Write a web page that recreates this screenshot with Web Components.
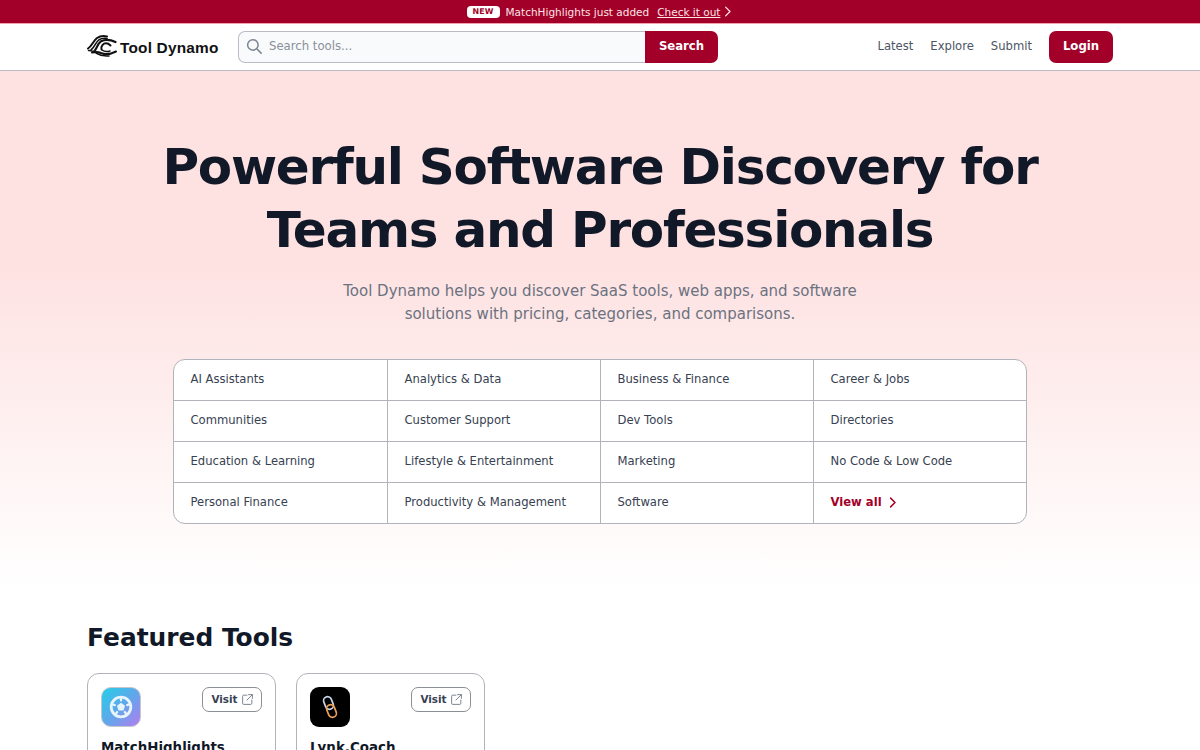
<!DOCTYPE html>
<html lang="en"><head><meta charset="utf-8"><title>Tool Dynamo</title>
<style>
html,body{margin:0;padding:0;height:750px;overflow:hidden;background:#fff;font-family:"DejaVu Sans",sans-serif;color:#111827}
</style></head><body>
<td-banner></td-banner>
<td-header></td-header>
<td-hero></td-hero>
<td-featured></td-featured>
<script>
const def=(name,html)=>{customElements.define(name,class extends HTMLElement{constructor(){super();this.attachShadow({mode:'open'}).innerHTML=html;}})};
const chev=(s,c,w)=>`<svg width="${s}" height="${s}" viewBox="0 0 24 24" fill="none" stroke="${c}" stroke-width="${w}" stroke-linecap="round" stroke-linejoin="round" style="flex:none"><path d="M9 5l7 7-7 7"/></svg>`;
def('td-banner',`<style>:host{display:flex;align-items:center;justify-content:center;height:24px;box-sizing:border-box;padding-left:2px;background:#a20028;color:#fde3e6;font-size:10.5px;border-bottom:1px solid #f0a0ac}
.n{background:#fff;color:#a20028;font-size:7.9px;font-weight:700;letter-spacing:.2px;border-radius:4px;width:33px;text-align:center;height:12px;line-height:12px;margin-right:6px}
a{color:inherit;text-decoration:underline;margin:0 0 0 8px}</style><span class="n">NEW</span><span>MatchHighlights just added</span><a>Check it out</a>${chev(15,'#fde3e6',2)}`);
def('td-header',`<style>:host{display:flex;align-items:center;box-sizing:border-box;height:47px;padding:0 87px 1px;background:#fff;border-bottom:1px solid #b9bcc2}
.logo{display:flex;align-items:center;width:151px;flex:none;gap:3px}
.logo b{font:700 15.4px "Liberation Sans",Arial,sans-serif;color:#111;margin-top:2px;letter-spacing:.2px}
.s{display:flex;width:480px;height:32px;box-sizing:border-box;flex:none}
.i{flex:1;display:flex;align-items:center;gap:5.600px;padding:0 0 1px 6.400px;background:#f8fafc;border:1px solid #b9bcc2;border-right:0;border-radius:7px 0 0 7px;color:#8a9099;font-size:11.7px}
.b{width:73px;padding-bottom:1px;box-sizing:border-box;background:#a20028;color:#fff;font-weight:700;font-size:11.7px;display:flex;align-items:center;justify-content:center;border-radius:0 7px 7px 0}
nav{margin-left:auto;display:flex;align-items:center;font-size:11.6px;color:#4b5563;gap:17px}
nav span{padding-bottom:1px}
nav .l{background:#a20028;color:#fff;font-weight:700;font-size:11.7px;width:64px;height:32px;box-sizing:border-box;display:flex;align-items:center;justify-content:center;border-radius:7px}</style>
<div class="logo"><svg width="30" height="23" viewBox="0 0 30 23" fill="none" stroke="#111" stroke-linecap="round"><path d="M1 13.500C5 11 6 6 10 3C13 1 17 .8 20 1.500" stroke-width="2"/><path d="M4 15C8 12 8 7.500 12 4.800C14.500 3.300 17 3 20 3.500" stroke-width="1.600"/><path d="M7 16.500C10.500 13 10 9 14 6.300C18 4.300 23 4.500 28.500 7" stroke-width="2.200"/><path d="M1.500 15.500C5 15 7.500 17 10 18.500C13 20.300 17 21.500 22 21" stroke-width="1.500"/><path d="M5 17.500C9 16.500 11 16.500 14 18C18 19.800 23 19.500 29 16.500" stroke-width="2"/><path d="M14.500 14.500C13.500 11 16.500 8.300 19 8.300C21 8.300 22 9 23.500 10.500" stroke-width="2"/><path d="M15 15C17 16.500 20 17 23 16" stroke-width="1.500"/></svg><b>Tool Dynamo</b></div>
<div class="s"><div class="i"><svg width="18" height="18" viewBox="0 0 24 24" fill="none" stroke="#7b8490" stroke-width="2" stroke-linecap="round"><circle cx="10.500" cy="10.500" r="7"/><path d="M16 16l5.500 5.500"/></svg><span>Search tools...</span></div><div class="b">Search</div></div>
<nav><span>Latest</span><span>Explore</span><span>Submit</span><span class="l">Login</span></nav>`);
const cats=['AI Assistants','Analytics & Data','Business & Finance','Career & Jobs','Communities','Customer Support','Dev Tools','Directories','Education & Learning','Lifestyle & Entertainment','Marketing','No Code & Low Code','Personal Finance','Productivity & Management','Software'];
def('td-hero',`<style>:host{display:block;height:519px;box-sizing:border-box;padding-top:65px;background:linear-gradient(#fee2e2 0%,#fee2e2 38%,#fff 100%);text-align:center}
h1{margin:0;font-size:50px;letter-spacing:-.025em;line-height:62.500px;font-weight:700;color:#111827}
p{margin:19px 0 0;font-size:15px;line-height:23px;color:#6b7280}
.g{margin:33px auto 0;width:854px;box-sizing:border-box;background:#fff;border:1px solid #b0b3b9;border-radius:12px;display:grid;grid-template-columns:214px 213px 213px 1fr;grid-template-rows:41px 41px 41px 40px;overflow:hidden;text-align:left}
.c{display:flex;align-items:center;gap:3px;padding:0 0 2px 16.500px;font-size:11.6px;color:#374151;border-right:1px solid #b0b3b9;border-bottom:1px solid #b0b3b9}
.c:nth-child(4n){border-right:0}.c:nth-child(n+13){border-bottom:0}
.v{color:#a20028;font-weight:700}</style>
<h1>Powerful Software Discovery for<br>Teams and Professionals</h1>
<p>Tool Dynamo helps you discover SaaS tools, web apps, and software<br>solutions with pricing, categories, and comparisons.</p>
<div class="g">${cats.map(c=>`<div class="c">${c.replace('&','&amp;')}</div>`).join('')}<div class="c v">View all ${chev(15,'#a20028',2.4)}</div></div>`);
def('td-card',`<style>:host{display:block;width:189px;height:140px;box-sizing:border-box;padding:13px;border:1px solid #b0b3b9;border-radius:12px;background:#fff}
.t{display:flex;justify-content:space-between;align-items:flex-start}
.v{display:flex;align-items:center;justify-content:center;gap:3px;height:25px;width:60px;box-sizing:border-box;padding:0 0 1px 1px;border:1px solid #8b8f96;border-radius:7px;font-size:10.4px;font-weight:700;color:#374151}
h3{margin:11px 0 0;font-size:13.4px;line-height:20px;font-weight:700;color:#111827}</style>
<div class="t"><slot name="icon"></slot><span class="v">Visit <svg width="13" height="13" viewBox="0 0 24 24" fill="none" stroke="#6b7280" stroke-width="1.600" stroke-linecap="round" stroke-linejoin="round"><path d="M11 4H5a2 2 0 0 0-2 2v13a2 2 0 0 0 2 2h13a2 2 0 0 0 2-2v-6"/><path d="M14 3h7v7M21 3L11 13"/></svg></span></div><h3><slot></slot></h3>`);
def('td-featured',`<style>:host{display:block;padding:0 87px}
h2{margin:31px 0 18px;font-size:24.9px;line-height:34px;font-weight:700;color:#111827}
.r{display:flex;gap:20px}</style><h2>Featured Tools</h2><div class="r">
<td-card>MatchHighlights<svg slot="icon" width="40" height="40" viewBox="0 0 40 40" style="display:block"><defs><linearGradient id="a" x1="0" y1="0" x2="1" y2="1"><stop offset="0" stop-color="#22cfe8"/><stop offset=".5" stop-color="#5fa8ea"/><stop offset="1" stop-color="#b57cf0"/></linearGradient></defs><rect x=".5" y=".5" width="39" height="39" rx="9.500" fill="url(#a)" stroke="#c4c7cc"/><circle cx="20" cy="20" r="9.800" fill="none" stroke="#e8f4fb" stroke-width="2.800"/><path d="M20 15.800l4 2.900-1.500 4.800h-5l-1.500-4.800z" fill="#e8f4fb"/><path d="M20 11.500v2M12 17.500l1.800.6M28 17.500l-1.800.6M15 26.500l1.200-1.500M25 26.500l-1.200-1.500" stroke="#e8f4fb" stroke-width="2.200" stroke-linecap="round"/></svg></td-card>
<td-card>Lynk.Coach<svg slot="icon" width="40" height="40" viewBox="0 0 40 40" style="display:block"><rect width="40" height="40" rx="9" fill="#000"/><g fill="none" stroke-width="1.700"><rect x="14.500" y="9.500" width="8" height="13" rx="4" transform="rotate(-22 18.500 16)" stroke="#c8d4ea"/><rect x="17.500" y="17.500" width="8" height="13" rx="4" transform="rotate(-22 21.500 24)" stroke="#ef9f52"/></g></svg></td-card></div>`);
</script>
</body></html>
